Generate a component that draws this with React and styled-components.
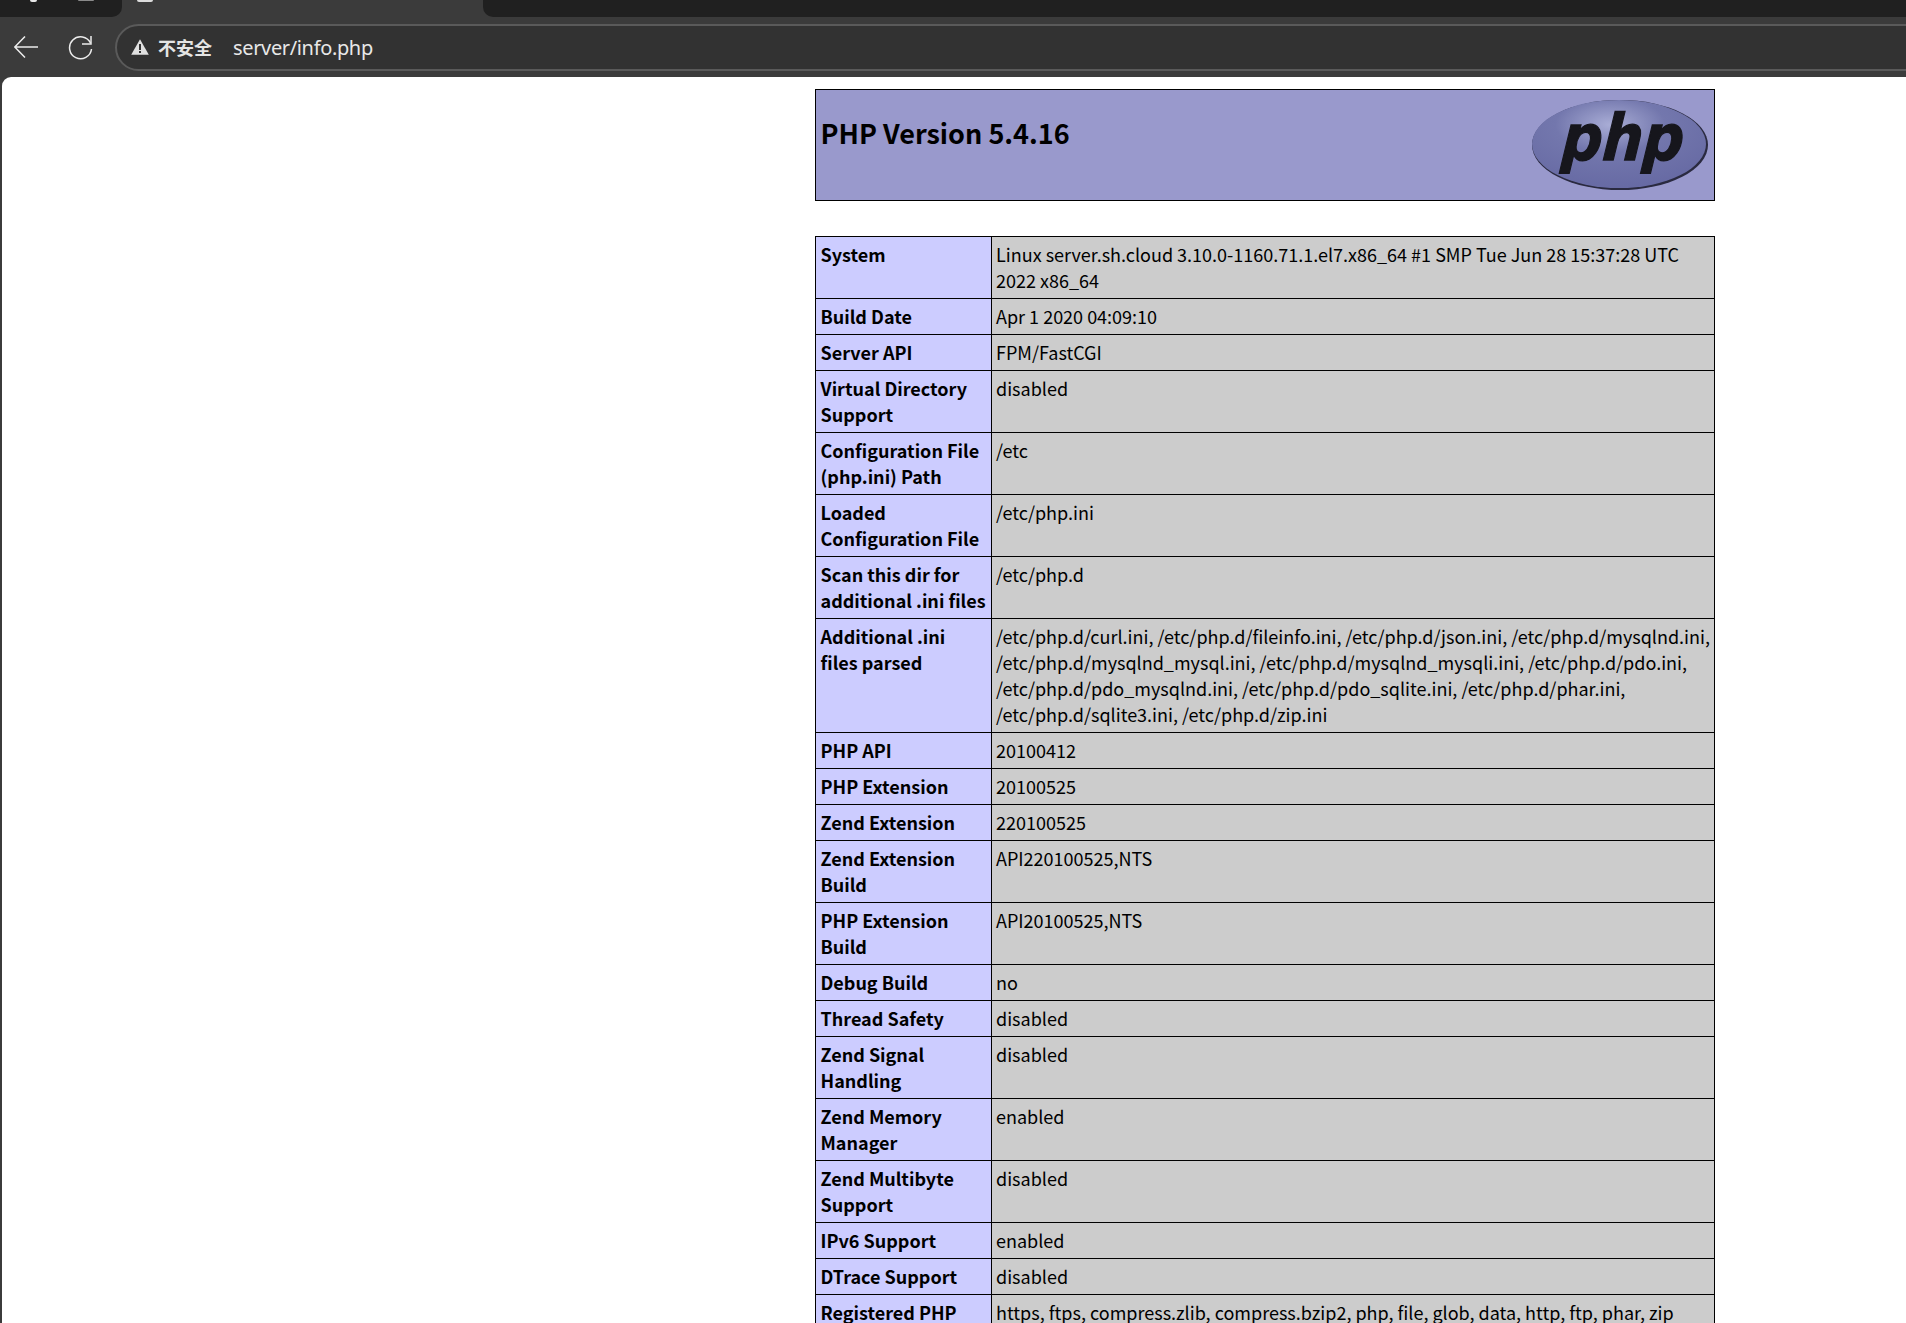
import React from "react";
import styled, { createGlobalStyle } from "styled-components";

const rows = [
  ["System", "Linux server.sh.cloud 3.10.0-1160.71.1.el7.x86_64 #1 SMP Tue Jun 28 15:37:28 UTC 2022 x86_64"],
  ["Build Date", "Apr 1 2020 04:09:10"],
  ["Server API", "FPM/FastCGI"],
  ["Virtual Directory Support", "disabled"],
  ["Configuration File (php.ini) Path", "/etc"],
  ["Loaded Configuration File", "/etc/php.ini"],
  ["Scan this dir for additional .ini files", "/etc/php.d"],
  ["Additional .ini files\u00a0parsed", "/etc/php.d/curl.ini, /etc/php.d/fileinfo.ini, /etc/php.d/json.ini, /etc/php.d/mysqlnd.ini, /etc/php.d/mysqlnd_mysql.ini, /etc/php.d/mysqlnd_mysqli.ini, /etc/php.d/pdo.ini, /etc/php.d/pdo_mysqlnd.ini, /etc/php.d/pdo_sqlite.ini, /etc/php.d/phar.ini, /etc/php.d/sqlite3.ini, /etc/php.d/zip.ini"],
  ["PHP API", "20100412"],
  ["PHP Extension", "20100525"],
  ["Zend Extension", "220100525"],
  ["Zend Extension Build", "API220100525,NTS"],
  ["PHP Extension Build", "API20100525,NTS"],
  ["Debug Build", "no"],
  ["Thread Safety", "disabled"],
  ["Zend Signal Handling", "disabled"],
  ["Zend Memory Manager", "enabled"],
  ["Zend Multibyte Support", "disabled"],
  ["IPv6 Support", "enabled"],
  ["DTrace Support", "disabled"],
  ["Registered PHP Streams", "https, ftps, compress.zlib, compress.bzip2, php, file, glob, data, http, ftp, phar, zip"],
];

const GlobalStyle = createGlobalStyle`
  html, body {
    margin: 0;
    height: 1323px;
    overflow: hidden;
    background: #3b3b3b;
  }
`;

const Window = styled.div`
  height: 1323px;
  overflow: hidden;
  font-family: "Noto Sans CJK SC", "Noto Sans", sans-serif;
`;

const TabStrip = styled.div`
  height: 17px;
  background: #3b3b3b;
  display: flex;
`;

const InactiveTabs = styled.div`
  flex: ${(p) => (p.$grow ? 1 : "none")};
  width: ${(p) => (p.$grow ? "auto" : "122px")};
  background: #202020;
  border-radius: ${(p) => (p.$grow ? "0 0 0 10px" : "0 0 10px 0")};
  position: relative;
`;

const ActiveTab = styled.div`
  width: 361px;
  position: relative;
`;

// the bottoms of the tab icons, the window is cut off just above them
const TabIconStub = styled.i`
  position: absolute;
  top: 0;
  left: ${(p) => p.$left}px;
  width: ${(p) => p.$width}px;
  height: ${(p) => p.$height}px;
  background: ${(p) => p.$color};
  border-radius: 0 0 4px 4px;
`;

const Toolbar = styled.div`
  height: 60px;
  background: #3b3b3b;
  display: flex;
  align-items: center;
  padding-left: 14px;
`;

const ToolIcon = styled.svg`
  display: block;
  flex: none;
  fill: none;
  stroke: #ececec;
  stroke-width: 1.5;
`;

const Reload = styled(ToolIcon)`
  margin-left: 30px;
`;

const Omnibox = styled.div`
  flex: 1;
  height: 47px;
  margin-left: 22px;
  margin-right: -40px;
  box-sizing: border-box;
  border: 2px solid #5a5a5a;
  border-radius: 24px;
  background: #323232;
  display: flex;
  align-items: center;
  padding-left: 14px;
  color: #e8e8e8;
`;

const Insecure = styled.span`
  font-size: 18px;
  font-weight: 700;
  margin-left: 9px;
  margin-right: 21px;
  color: #e4e4e4;
`;

const Url = styled.span`
  font-size: 20px;
  letter-spacing: -0.35px;
  font-family: "Noto Sans", sans-serif;
`;

const Page = styled.div`
  height: 1246px;
  margin-left: 2px;
  padding: 12px 0 0 813px;
  box-sizing: border-box;
  background: #fff;
  border-top-left-radius: 9px;
  color: #000;
  font-size: 18px;
  line-height: 26px;
`;

const Header = styled.div`
  width: 900px;
  height: 112px;
  box-sizing: border-box;
  border: 1px solid #000;
  background: #9999cc;
  display: flex;
  justify-content: space-between;
  padding: 4px 5px 4px 4.5px;
`;

const Title = styled.h1`
  margin: 15px 0 0;
  font-size: 27px;
  font-weight: 700;
  line-height: 48px;
`;

const Logo = styled.svg`
  display: block;
  margin-top: 5px;
`;

const LogoWord = styled.text`
  font-family: "DejaVu Sans", sans-serif;
  font-style: italic;
  font-weight: 700;
  font-size: 64px;
  fill: #16161c;
  stroke: #16161c;
  stroke-width: 1.3;
`;

const Table = styled.table`
  width: 900px;
  margin-top: 35px;
  border-collapse: collapse;
  table-layout: fixed;
`;

const Key = styled.td`
  width: 169px;
  border: 1px solid #000;
  padding: 4px 1.5px 5px 4.5px;
  vertical-align: top;
  background: #ccccff;
  font-weight: 700;
`;

const Value = styled.td`
  border: 1px solid #000;
  padding: 4px 4px 5px 4px;
  vertical-align: top;
  background: #cccccc;
`;

export default function App() {
  return (
    <Window>
      <GlobalStyle />
      <TabStrip>
        <InactiveTabs>
          <TabIconStub $left={30} $width={7} $height={2} $color="#e8e8e8" />
          <TabIconStub $left={78} $width={16} $height={1} $color="#8a8a8a" />
        </InactiveTabs>
        <ActiveTab>
          <TabIconStub $left={15} $width={16} $height={2} $color="#dcdcdc" />
        </ActiveTab>
        <InactiveTabs $grow />
      </TabStrip>
      <Toolbar>
        <ToolIcon width="24" height="22" viewBox="0 0 24 22">
          <path d="M0.5 11h23.5M11 0.5 0.8 11 11 21.5" />
        </ToolIcon>
        <Reload width="25" height="25" viewBox="0 0 25 25">
          <path d="M22.5 8A11 11 0 1 0 23.5 14" />
          <path d="M23 1v8h-9" />
        </Reload>
        <Omnibox>
          <svg width="18" height="16" viewBox="0 0 18 16">
            <path d="M9 0.3 17.8 15.7H0.2Z" fill="#e0e0e0" />
            <path d="M8 5h2v6H8zM8 12h2v2H8z" fill="#323232" />
          </svg>
          <Insecure>不安全</Insecure>
          <Url>server/info.php</Url>
        </Omnibox>
      </Toolbar>
      <Page>
        <Header>
          <Title>PHP Version 5.4.16</Title>
          <Logo width="178" height="92" viewBox="0 0 178 92">
            <defs>
              <radialGradient id="phpOval" cx="45%" cy="28%" r="75%">
                <stop offset="0" stopColor="#a9add6" />
                <stop offset="0.42" stopColor="#7377ad" />
                <stop offset="1" stopColor="#6669a3" />
              </radialGradient>
            </defs>
            <ellipse cx="89" cy="46" rx="88" ry="45" fill="#2a2a40" />
            <ellipse cx="88" cy="45" rx="87" ry="44" fill="url(#phpOval)" />
            <LogoWord x="34" y="61" transform="skewX(-4)" textLength="122" lengthAdjust="spacingAndGlyphs">php</LogoWord>
          </Logo>
        </Header>
        <Table>
          <tbody>
            {rows.map(([k, v]) => (
              <tr key={k}>
                <Key>{k}</Key>
                <Value>{v}</Value>
              </tr>
            ))}
          </tbody>
        </Table>
      </Page>
    </Window>
  );
}
